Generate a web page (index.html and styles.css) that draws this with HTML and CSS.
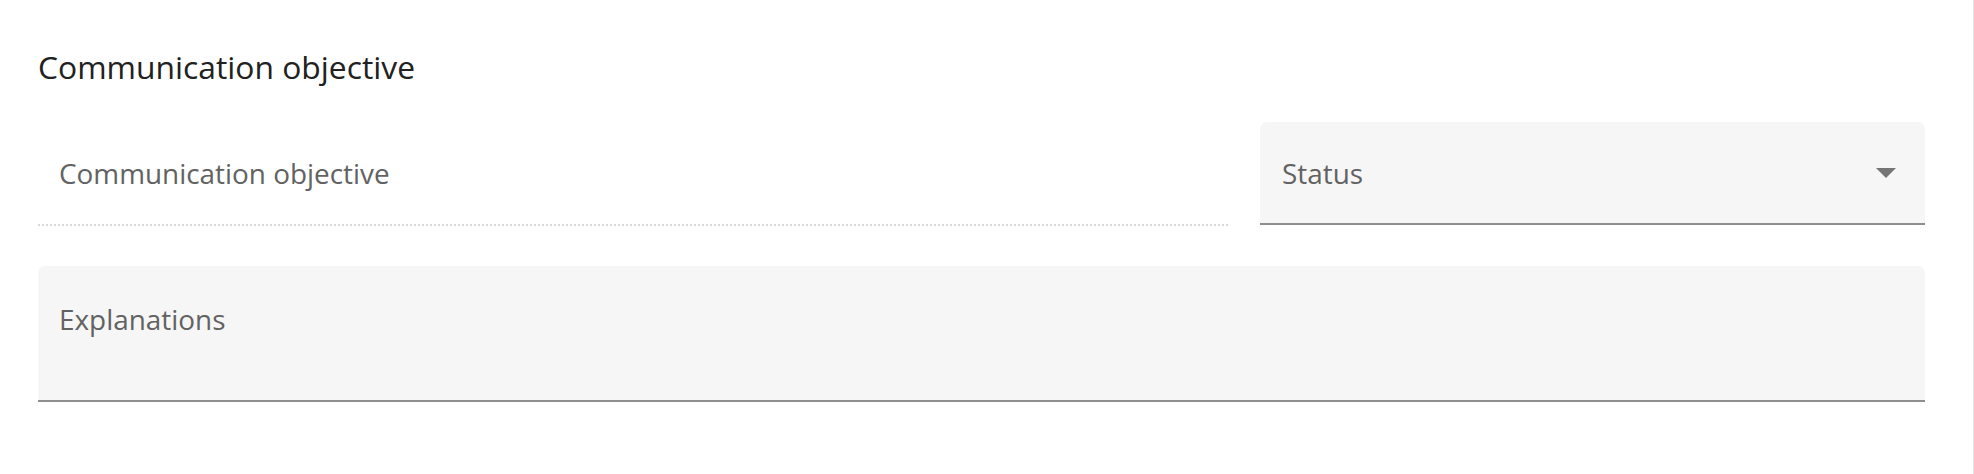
FILE: index.html
```html
<!DOCTYPE html>
<html>

<head>
  <meta charset="utf-8" />
  <title>Communication objective</title>
  <meta name="viewport" content="width=device-width, initial-scale=1">

  <link rel="stylesheet" href="styles.css">
</head>

<body>
  <div class="page">
    <h2 class="section_title">Communication objective</h2>

    <div class="row">
      <div class="field field-disabled">
        <span class="field_label">Communication objective</span>
      </div>
      <div class="field field-filled field-select">
        <span class="field_label">Status</span>
        <svg class="select_arrow" width="20" height="10" viewBox="0 0 20 10">
          <path d="M0 0 L20 0 L10 10 Z" fill="#757575" />
        </svg>
      </div>
    </div>

    <div class="row row-full">
      <div class="field field-filled field-multiline">
        <span class="field_label">Explanations</span>
      </div>
    </div>
  </div>
</body>

</html>
```

FILE: styles.css
```css
html,
body {
  margin: 0;
  background-color: #fff;
}

body {
  font-family: "Open Sans", "Noto Sans", sans-serif;
}

.page {
  box-sizing: border-box;
  min-height: 100vh;
  padding: 45px 48px 0 38px;
  border-right: 1px solid #e4e4e4;
}

.section_title {
  margin: 0;
  font-size: 31.8px;
  line-height: 43px;
  font-weight: 400;
  color: #212121;
}

.row {
  display: grid;
  grid-template-columns: 1fr 665px;
  column-gap: 32px;
  align-items: start;
  margin-top: 34px;
}

.row-full {
  grid-template-columns: 1fr;
  margin-top: 40px;
}

.field {
  box-sizing: border-box;
  display: flex;
  align-items: center;
  height: 103px;
  padding: 0 21px;
}

.field_label {
  font-size: 27.9px;
  line-height: 38px;
  color: #626262;
}

.field-disabled {
  height: 104px;
  border-bottom: 2px dotted #d9d9d9;
}

.field-filled {
  background-color: #f6f6f6;
  border-radius: 7px 7px 0 0;
  border-bottom: 2px solid #8e8e8e;
}

.field-select {
  justify-content: space-between;
  padding-left: 22px;
  padding-right: 29px;
}

.select_arrow {
  display: block;
  flex-shrink: 0;
}

.field-multiline {
  align-items: flex-start;
  height: 136px;
  padding-top: 34px;
}
```
